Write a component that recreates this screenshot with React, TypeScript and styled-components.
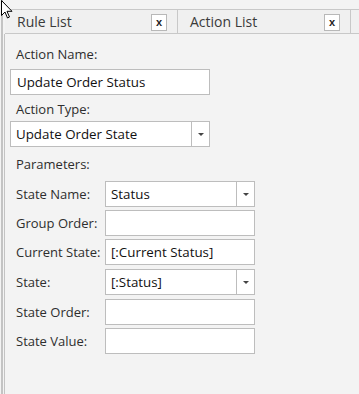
import styled, { createGlobalStyle } from "styled-components";

const GlobalStyle = createGlobalStyle`
  html, body {
    margin: 0;
    padding: 0;
    background: #f3f3f3;
  }
  body {
    font-family: "Open Sans", "Noto Sans", sans-serif;
    font-size: 13px;
    color: #2e2e2e;
  }
`;

const Page = styled.div`
  position: relative;
  width: 359px;
  height: 394px;
  padding-left: 1px;
  box-sizing: border-box;
  overflow: hidden;
`;

const Frame = styled.div`
  height: 100%;
  border-left: 2px solid #c3c3c3;
  padding-left: 1px;
  padding-top: 9px;
  box-sizing: border-box;
  display: flex;
  flex-direction: column;
`;

const TabBar = styled.div`
  display: flex;
  height: 25px;
  box-sizing: border-box;
  border-top: 1px solid #c8c8c8;
  border-bottom: 1px solid #c8c8c8;
  background: #f0f0f0;
  margin-left: 1px;
`;

const Tab = styled.div`
  width: 173px;
  display: flex;
  align-items: center;
  justify-content: space-between;
  padding: 0 10px 0 12px;
  box-sizing: border-box;
  border-right: 1px solid #c8c8c8;
  font-size: 14px;
  color: #3a3a3a;
`;

const CloseBox = styled.span`
  width: 16px;
  height: 17px;
  box-sizing: border-box;
  border: 1px solid #b8b8b8;
  background: #fff;
  display: flex;
  align-items: center;
  justify-content: center;
  font-family: "Liberation Sans", sans-serif;
  font-weight: bold;
  font-size: 11px;
  color: #222;
  margin-top: 1px;
`;

const Panel = styled.div`
  flex: 1;
  border-left: 1px solid #c3c3c3;
  padding: 0 0 0 5px;
  display: flex;
  flex-direction: column;
`;

const Label = styled.div<{ $top: number }>`
  margin-top: ${(p) => p.$top}px;
  padding-left: 6px;
  line-height: 18px;
  height: 18px;
`;

const Field = styled.div<{ $top: number; $width: number }>`
  margin-top: ${(p) => p.$top}px;
  width: ${(p) => p.$width}px;
  height: 26px;
  box-sizing: border-box;
  border: 1px solid #bdbdbd;
  background: #fff;
  display: flex;
  align-items: stretch;
  color: #111;
`;

const FieldText = styled.div<{ $pad: number }>`
  flex: 1;
  display: flex;
  align-items: center;
  padding-left: ${(p) => p.$pad}px;
  font-size: 13.33px;
`;

const Arrow = styled.div`
  width: 17px;
  border-left: 1px solid #bdbdbd;
  display: flex;
  align-items: center;
  justify-content: center;
  &::after {
    content: "";
    border-left: 3px solid transparent;
    border-right: 3px solid transparent;
    border-top: 3px solid #444;
  }
`;

const Row = styled.div<{ $top: number }>`
  display: flex;
  align-items: center;
  margin-top: ${(p) => p.$top}px;
`;

const RowLabel = styled.div`
  width: 95px;
  padding-left: 6px;
  box-sizing: border-box;
`;

const Cursor = styled.svg`
  position: absolute;
  left: 0;
  top: 0;
`;

type Param = {
  label: string;
  value?: string;
  select?: boolean;
  top: number;
};

const params: Param[] = [
  { label: "State Name:", value: "Status", select: true, top: 8 },
  { label: "Group Order:", top: 3 },
  { label: "Current State:", value: "[:Current Status]", top: 3 },
  { label: "State:", value: "[:Status]", select: true, top: 4 },
  { label: "State Order:", top: 4 },
  { label: "State Value:", top: 3 },
];

export default function App() {
  return (
    <Page>
      <GlobalStyle />
      <Frame>
        <TabBar>
          <Tab>
            <span>Rule List</span>
            <CloseBox>x</CloseBox>
          </Tab>
          <Tab>
            <span>Action List</span>
            <CloseBox>x</CloseBox>
          </Tab>
        </TabBar>
        <Panel>
          <Label $top={11}>Action Name:</Label>
          <Field $top={6} $width={200}>
            <FieldText $pad={6}>Update Order Status</FieldText>
          </Field>
          <Label $top={5}>Action Type:</Label>
          <Field $top={3} $width={200}>
            <FieldText $pad={5}>Update Order State</FieldText>
            <Arrow />
          </Field>
          <Label $top={8}>Parameters:</Label>
          {params.map((p, i) => (
            <Row key={i} $top={p.top}>
              <RowLabel>{p.label}</RowLabel>
              <Field $top={0} $width={150}>
                <FieldText $pad={5}>{p.value}</FieldText>
                {p.select && <Arrow />}
              </Field>
            </Row>
          ))}
        </Panel>
      </Frame>
      <Cursor width="14" height="20" viewBox="0 0 14 20">
        <path
          d="M1.5 0.5 L1.5 15.5 L5 12 L7.5 18 L9.5 17 L7 11.3 L12 11.3 Z"
          fill="#fff"
          stroke="#000"
          strokeWidth="1"
          strokeLinejoin="round"
        />
      </Cursor>
    </Page>
  );
}
